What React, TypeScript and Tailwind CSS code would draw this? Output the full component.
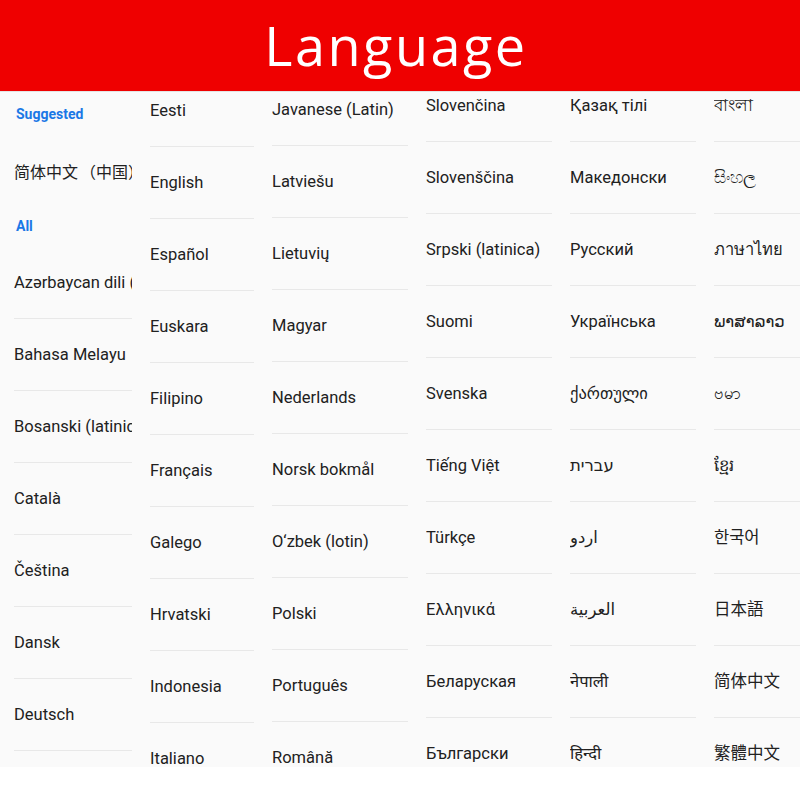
import React from "react";

type Column = {
  width: string;
  offset: string;
  items: string[];
};

const columns: Column[] = [
  {
    width: "w-[104px]",
    offset: "-mt-[17px]",
    items: ["Eesti", "English", "Español", "Euskara", "Filipino", "Français", "Galego", "Hrvatski", "Indonesia", "Italiano"],
  },
  {
    width: "w-[136px]",
    offset: "-mt-[18px]",
    items: ["Javanese (Latin)", "Latviešu", "Lietuvių", "Magyar", "Nederlands", "Norsk bokmål", "O‘zbek (lotin)", "Polski", "Português", "Română"],
  },
  {
    width: "w-[126px]",
    offset: "-mt-[22px]",
    items: ["Slovenčina", "Slovenščina", "Srpski (latinica)", "Suomi", "Svenska", "Tiếng Việt", "Türkçe", "Ελληνικά", "Беларуская", "Български"],
  },
  {
    width: "w-[126px]",
    offset: "-mt-[22px]",
    items: ["Қазақ тілі", "Македонски", "Русский", "Українська", "ქართული", "עברית", "اردو", "العربية", "नेपाली", "हिन्दी"],
  },
  {
    width: "flex-1 min-w-0",
    offset: "-mt-[22px]",
    items: ["বাংলা", "සිංහල", "ภาษาไทย", "ພາສາລາວ", "ဗမာ", "ខ្មែរ", "한국어", "日本語", "简体中文", "繁體中文"],
  },
];

const allFirst = ["Azərbaycan dili (latın)", "Bahasa Melayu", "Bosanski (latinica)", "Català", "Čeština", "Dansk", "Deutsch", "Eesti"];

const Row: React.FC<{ label: string }> = ({ label }) => (
  <div className="h-[72px] shrink-0 flex items-center pt-[2px] border-b border-[#e8e8e8] whitespace-nowrap overflow-hidden text-[16.5px] text-[#212121]">
    {label}
  </div>
);

const App: React.FC = () => {
  return (
    <div
      className="w-[800px] h-[800px] bg-white flex flex-col overflow-hidden"
      style={{ fontFamily: "Roboto, 'Noto Sans', 'DejaVu Sans', 'Noto Sans CJK SC', sans-serif" }}
    >
      {/* Header */}
      <div className="h-[92px] shrink-0 bg-[#ef0000] flex items-center justify-center border-b border-[#e4e4e4]">
        <h1
          className="text-white text-[54px] leading-none font-medium tracking-[2.5px] -mt-[2px] -ml-[8px]"
          style={{ fontFamily: "'Open Sans', 'DejaVu Sans', sans-serif" }}
        >
          Language
        </h1>
      </div>

      {/* Language lists */}
      <div className="h-[675px] shrink-0 bg-[#fafafa] flex gap-[18px] pl-[14px] overflow-hidden">
        {/* Suggested + All */}
        <div className="w-[118px] shrink-0 flex flex-col overflow-hidden">
          <div className="h-[44px] shrink-0 flex items-center pl-[2px] text-[14px] font-bold text-[#1a78e6]">
            Suggested
          </div>
          <div
            className="h-[70px] shrink-0 flex items-center whitespace-nowrap overflow-hidden text-[16px] text-[#212121]"
            style={{ fontFamily: "'Noto Sans CJK SC', sans-serif" }}
          >
            <span>简体中文</span>
            <span className="ml-[2px]">（中国）</span>
          </div>
          <div className="h-[41px] shrink-0 flex items-center pl-[2px] text-[14px] font-bold text-[#1a78e6]">
            All
          </div>
          {allFirst.map((l) => (
            <Row key={l} label={l} />
          ))}
        </div>

        {columns.map((c, i) => (
          <div key={i} className={`${c.width} shrink-0 overflow-hidden`}>
            <div className={`${c.offset} flex flex-col`}>
              {c.items.map((l) => (
                <Row key={l} label={l} />
              ))}
            </div>
          </div>
        ))}
      </div>
    </div>
  );
};

export default App;
